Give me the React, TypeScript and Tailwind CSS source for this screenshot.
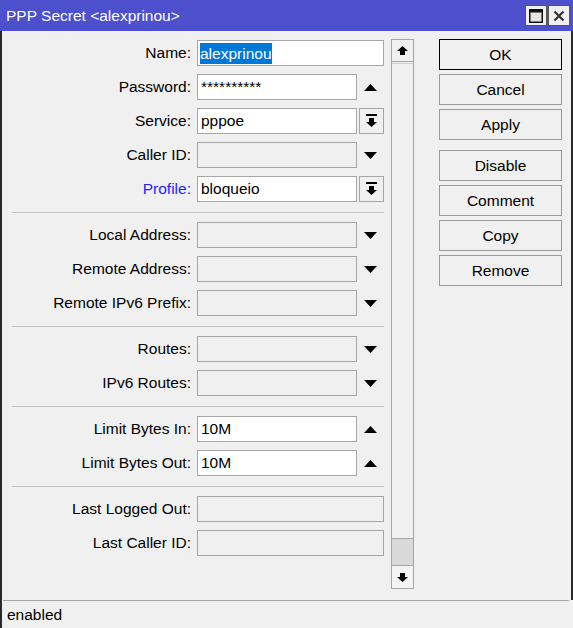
import React from "react";

const FONT = { fontFamily: "'Liberation Sans', Arial, sans-serif" };

function UpTri() {
  return (
    <svg width="13" height="7" viewBox="0 0 13 7">
      <polygon points="6.5,0 13,7 0,7" fill="#000" />
    </svg>
  );
}
function DownTri() {
  return (
    <svg width="13" height="7" viewBox="0 0 13 7">
      <polygon points="0,0 13,0 6.5,7" fill="#000" />
    </svg>
  );
}
function DropIcon() {
  return (
    <svg width="11" height="14" viewBox="0 0 11 14">
      <rect x="0" y="0" width="11" height="2" fill="#000" />
      <polygon points="3,4 8,4 8,8 11,8 5.5,13 0,8 3,8" fill="#000" />
    </svg>
  );
}
function ArrowUp() {
  return (
    <svg width="11" height="9" viewBox="0 0 11 9">
      <polygon points="5.5,0 11,5 8,5 8,9 3,9 3,5 0,5" fill="#000" />
    </svg>
  );
}
function ArrowDown() {
  return (
    <svg width="11" height="9" viewBox="0 0 11 9">
      <polygon points="3,0 8,0 8,4 11,4 5.5,9 0,4 3,4" fill="#000" />
    </svg>
  );
}

type Kind = "full" | "tri-up" | "tri-down" | "drop";

function Row({
  label,
  value,
  kind,
  enabled,
  blue,
  selected,
}: {
  label: string;
  value?: string;
  kind: Kind;
  enabled?: boolean;
  blue?: boolean;
  selected?: boolean;
}) {
  const inputCls =
    "h-[26px] border border-[#a6a6a6] flex items-center pl-[3px] overflow-hidden whitespace-nowrap " +
    (enabled ? "bg-white" : "bg-[#f0f0f0]");
  return (
    <div className="flex items-center h-[26px]">
      <div
        className={
          "w-[179px] text-right whitespace-nowrap " +
          (blue ? "text-[#1f1fff]" : "text-black")
        }
      >
        {label}
      </div>
      <div className="ml-[6px] flex items-center">
        {kind === "full" ? (
          <div className={inputCls + " w-[187px]"}>
            {selected ? (
              <span className="bg-[#0078d7] text-white leading-[21px] -ml-[1px]">
                {value}
              </span>
            ) : (
              value
            )}
          </div>
        ) : (
          <>
            <div className={inputCls + " w-[160px]"}>{value}</div>
            {kind === "drop" ? (
              <div className="ml-[2px] w-[25px] h-[26px] border border-[#a6a6a6] bg-[#f0f0f0] flex items-center justify-center">
                <DropIcon />
              </div>
            ) : (
              <div className="w-[27px] h-[26px] flex items-center justify-center">
                {kind === "tri-up" ? <UpTri /> : <DownTri />}
              </div>
            )}
          </>
        )}
      </div>
    </div>
  );
}

function Sep() {
  return <div className="mt-[10px] mb-[9px] h-px bg-[#c4c4c4]" />;
}

function Btn({ label, primary }: { label: string; primary?: boolean }) {
  return (
    <div
      className={
        "h-[31px] w-[123px] flex items-center justify-center bg-[#f0f0f0] border " +
        (primary ? "border-black" : "border-[#9a9a9a]")
      }
    >
      {label}
    </div>
  );
}

export default function App() {
  return (
    <div
      className="w-[573px] h-[628px] bg-[#f0f0f0] text-[15.5px] text-black overflow-hidden flex flex-col"
      style={FONT}
    >
      {/* Title bar */}
      <div className="h-[31px] bg-[#4c50cc] flex items-center shrink-0">
        <div className="ml-[6px] text-white flex-1">PPP Secret &lt;alexprinou&gt;</div>
        <div className="flex gap-[1px] mr-[3px]">
          <div className="w-[22px] h-[21px] bg-[#f0f0f0] border border-[#555] flex items-center justify-center">
            <svg width="14" height="14" viewBox="0 0 14 14">
              <rect x="0.75" y="0.75" width="12.5" height="12.5" fill="#e6e6e6" stroke="#111" strokeWidth="1.5" />
              <rect x="0" y="0" width="14" height="3.5" fill="#111" />
            </svg>
          </div>
          <div className="w-[22px] h-[21px] bg-[#f0f0f0] border border-[#555] flex items-center justify-center">
            <svg width="12" height="12" viewBox="0 0 12 12">
              <path d="M1.5 1.5 L10.5 10.5 M10.5 1.5 L1.5 10.5" stroke="#333" strokeWidth="2.2" />
            </svg>
          </div>
        </div>
      </div>

      {/* Body */}
      <div className="h-[569px] shrink-0 flex pt-[8px] border-l-2 border-r-2 border-[#2a2a2a]">
        {/* Form */}
        <div className="ml-[10px] w-[372px] pt-[1px] flex flex-col">
          <div className="flex flex-col gap-[8px]">
            <Row label="Name:" value="alexprinou" kind="full" enabled selected />
            <Row label="Password:" value="**********" kind="tri-up" enabled />
            <Row label="Service:" value="pppoe" kind="drop" enabled />
            <Row label="Caller ID:" kind="tri-down" />
            <Row label="Profile:" value="bloqueio" kind="drop" enabled blue />
          </div>
          <Sep />
          <div className="flex flex-col gap-[8px]">
            <Row label="Local Address:" kind="tri-down" />
            <Row label="Remote Address:" kind="tri-down" />
            <Row label="Remote IPv6 Prefix:" kind="tri-down" />
          </div>
          <Sep />
          <div className="flex flex-col gap-[8px]">
            <Row label="Routes:" kind="tri-down" />
            <Row label="IPv6 Routes:" kind="tri-down" />
          </div>
          <Sep />
          <div className="flex flex-col gap-[8px]">
            <Row label="Limit Bytes In:" value="10M" kind="tri-up" enabled />
            <Row label="Limit Bytes Out:" value="10M" kind="tri-up" enabled />
          </div>
          <Sep />
          <div className="flex flex-col gap-[8px]">
            <Row label="Last Logged Out:" kind="full" />
            <Row label="Last Caller ID:" kind="full" />
          </div>
        </div>

        {/* Scrollbar */}
        <div className="ml-[7px] w-[23px] h-[550px] flex flex-col border border-[#a6a6a6] bg-[#f0f0f0]">
          <div className="h-[22px] border-b border-[#a6a6a6] flex items-center justify-center shrink-0">
            <ArrowUp />
          </div>
          <div className="flex-1 border-b border-[#a6a6a6] mt-[1px] border-t border-t-[#d0d0d0]" />
          <div className="h-[27px] bg-[#d9d9d9] border-b border-[#a6a6a6] shrink-0" />
          <div className="h-[22px] flex items-center justify-center shrink-0 bg-[#f4f4f4]">
            <ArrowDown />
          </div>
        </div>

        {/* Buttons */}
        <div className="ml-[25px] flex flex-col">
          <div className="flex flex-col gap-[4px]">
            <Btn label="OK" primary />
            <Btn label="Cancel" />
            <Btn label="Apply" />
          </div>
          <div className="mt-[10px] flex flex-col gap-[4px]">
            <Btn label="Disable" />
            <Btn label="Comment" />
            <Btn label="Copy" />
            <Btn label="Remove" />
          </div>
        </div>
      </div>

      {/* Status bar */}
      <div className="h-[28px] shrink-0 border-l-2 border-[#2a2a2a]">
        <div className="ml-[1px] mr-[4px] h-full border-t border-[#a6a6a6] flex items-center pl-[4px]">
          enabled
        </div>
      </div>
    </div>
  );
}
